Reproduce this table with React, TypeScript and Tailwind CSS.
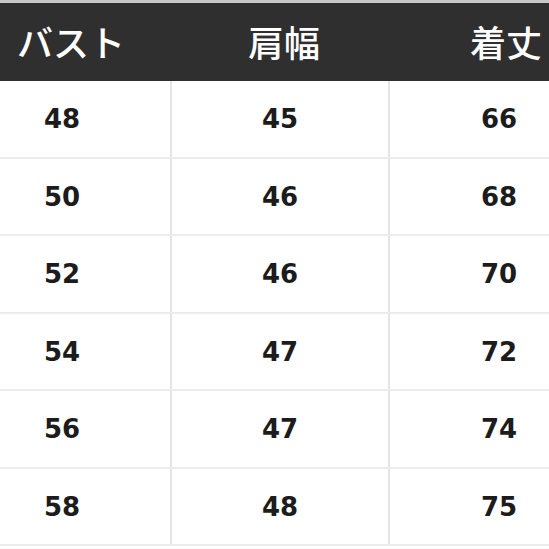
const headers = [
  { label: "バスト", pad: "pl-[16px]" },
  { label: "肩幅", pad: "pl-[6px]" },
  { label: "着丈", pad: "pl-[14px]" },
]

const rows = [
  ["48", "45", "66"],
  ["50", "46", "68"],
  ["52", "46", "70"],
  ["54", "47", "72"],
  ["56", "47", "74"],
  ["58", "48", "75"],
]

export default function App() {
  return (
    <div className="w-[549px] h-[549px] overflow-hidden bg-white border-t-[3px] border-[#c8c8c8]">
      <div className="ml-[-46px] w-[654px]">
        <div className="grid grid-cols-3 h-[78px] bg-[#2f2f2f] text-white">
          {headers.map((h) => (
            <div
              key={h.label}
              className={"flex items-center justify-center pb-[3px] text-[36px] font-medium " + h.pad}
              style={{ fontFamily: '"Noto Sans CJK JP", sans-serif' }}
            >
              {h.label}
            </div>
          ))}
        </div>
        {rows.map((r, i) => (
          <div key={i} className="grid grid-cols-3 h-[77.5px] border-b-[2px] border-[#ececec]">
            {r.map((v, j) => (
              <div
                key={j}
                className={
                  "flex items-center justify-center pt-[2px] text-[26px] font-bold text-[#1c1c1c] " +
                  (j < 2 ? "border-r-[2px] border-[#e4e4e4]" : "")
                }
                style={{ fontFamily: '"DejaVu Sans", Verdana, sans-serif' }}
              >
                {v}
              </div>
            ))}
          </div>
        ))}
      </div>
    </div>
  )
}
